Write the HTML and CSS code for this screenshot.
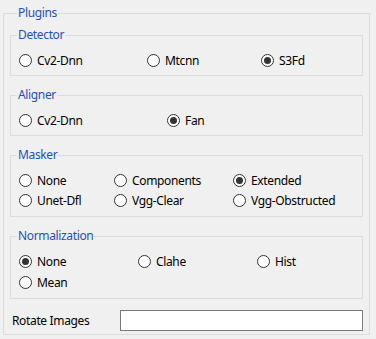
FILE: index.html
```html
<!DOCTYPE html>
<html lang="en">
<head>
    <meta charset="UTF-8">
    <title>Plugins</title>
    <link rel="stylesheet" href="styles.css">
</head>
<body>
    <fieldset class="group outer">
        <legend>Plugins</legend>

        <fieldset class="group">
            <legend>Detector</legend>
            <div class="options detector">
                <label class="radio"><span class="dot"></span>Cv2-Dnn</label>
                <label class="radio"><span class="dot"></span>Mtcnn</label>
                <label class="radio"><span class="dot on"></span>S3Fd</label>
            </div>
        </fieldset>

        <fieldset class="group">
            <legend>Aligner</legend>
            <div class="options aligner">
                <label class="radio"><span class="dot"></span>Cv2-Dnn</label>
                <label class="radio"><span class="dot on"></span>Fan</label>
            </div>
        </fieldset>

        <fieldset class="group tall">
            <legend>Masker</legend>
            <div class="options masker">
                <label class="radio"><span class="dot"></span>None</label>
                <label class="radio"><span class="dot"></span>Components</label>
                <label class="radio"><span class="dot on"></span>Extended</label>
                <label class="radio"><span class="dot"></span>Unet-Dfl</label>
                <label class="radio"><span class="dot"></span>Vgg-Clear</label>
                <label class="radio"><span class="dot"></span>Vgg-Obstructed</label>
            </div>
        </fieldset>

        <fieldset class="group">
            <legend>Normalization</legend>
            <div class="options normalization">
                <label class="radio"><span class="dot on"></span>None</label>
                <label class="radio"><span class="dot"></span>Clahe</label>
                <label class="radio"><span class="dot"></span>Hist</label>
                <label class="radio"><span class="dot"></span>Mean</label>
            </div>
        </fieldset>

        <div class="field">
            <span class="field-label">Rotate Images</span>
            <input type="text" class="entry">
        </div>
    </fieldset>
</body>
</html>
```

FILE: styles.css
```css
:root {
    --bg: #f0f0f0;
    --frame: #dcdcdc;
    --legend: #1f4fc1;
    --text: #000000;
    --radio: #333333;
}

* {
    box-sizing: border-box;
}

body {
    margin: 0;
    padding: 5px 0 0 3px;
    background: var(--bg);
    font-family: "Noto Sans", "Open Sans", sans-serif;
    font-size: 12px;
    letter-spacing: -0.35px;
    color: var(--text);
    width: 376px;
    height: 339px;
    overflow: hidden;
}

.group {
    margin: 0;
    border: 1px solid var(--frame);
    padding: 0 0 5px 0;
    min-width: 0;
}

.group.tall {
    padding-bottom: 6px;
}

.group legend {
    color: var(--legend);
    padding: 0 1px;
    margin-left: 6px;
    line-height: 16px;
}

.outer {
    width: 367px;
    height: 330px;
    padding: 0 6px 0 6px;
}

.outer > legend {
    margin-left: 7px;
}

.outer > .group {
    margin-top: 6px;
}

.outer > .group + .group {
    margin-top: 11px;
}

.options {
    display: grid;
    padding: 7px 0 0 8px;
    grid-auto-rows: 20px;
}

.detector {
    grid-template-columns: 128px 114px auto;
}

.aligner {
    grid-template-columns: 148px auto;
}

.masker {
    grid-template-columns: 95px 119px auto;
}

.normalization {
    grid-template-columns: 119px 119px auto;
    grid-auto-rows: 21px;
}

.radio {
    display: flex;
    align-items: center;
    gap: 5px;
    white-space: nowrap;
}

.dot {
    width: 13px;
    height: 13px;
    border: 1px solid var(--radio);
    border-radius: 50%;
    background: #ffffff;
    display: flex;
    align-items: center;
    justify-content: center;
    flex: none;
}

.dot.on::after {
    content: "";
    width: 7px;
    height: 7px;
    border-radius: 50%;
    background: var(--radio);
}

.field {
    display: flex;
    align-items: center;
    margin-top: 11px;
    height: 21px;
}

.field-label {
    width: 110px;
    padding-left: 2px;
}

.entry {
    width: 243px;
    height: 21px;
    margin: 0;
    border: 1px solid #7a7a7a;
    background: #ffffff;
    font: inherit;
    padding: 0 3px;
    outline: none;
}
```
